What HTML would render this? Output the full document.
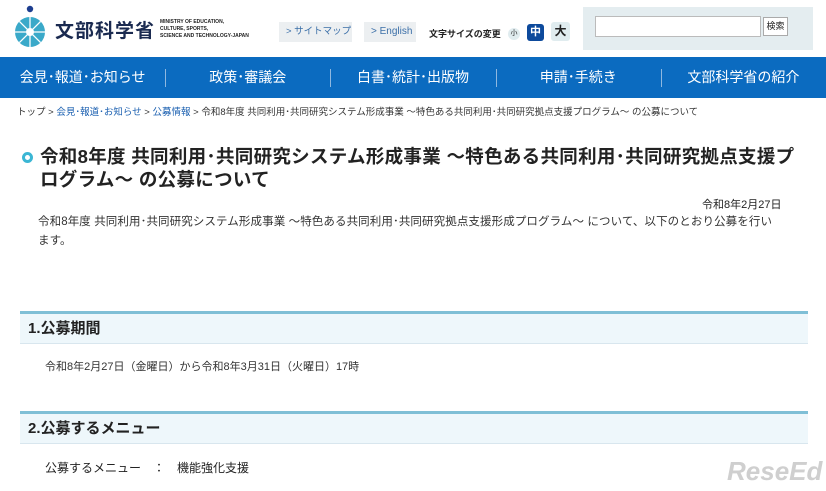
<!DOCTYPE html><html><head><meta charset="utf-8"><style>
*{margin:0;padding:0;box-sizing:border-box}
body{width:826px;height:491px;overflow:hidden;background:#fff;font-family:"Liberation Sans","Noto Sans CJK JP",sans-serif;color:#222;position:relative}
.a{position:absolute;white-space:nowrap}
.nav{position:absolute;left:0;top:57px;width:826px;height:41px;background:#0b6bc0;display:flex;color:#fff;font-size:14px}
.nav div{flex:1;text-align:center;line-height:41px;position:relative}
.nav div+div:before{content:"";position:absolute;left:0;top:12px;height:18px;border-left:1px solid #8fb8e0}
.btn{position:absolute;top:22px;height:20px;background:#eceff1;color:#3b6fa8;font-size:10px;line-height:20px;padding-left:7px;white-space:nowrap;overflow:hidden}
.sec{position:absolute;left:20px;width:788px;height:33px;border-top:3px solid #7fbfd6;background:#eef7fb;border-bottom:1px solid #d8e6ee;font-size:15px;font-weight:bold;line-height:30px;padding-left:8px}
</style></head><body>
<svg class="a" style="left:13px;top:5px" width="40" height="44" viewBox="0 0 40 44"><circle cx="17" cy="4" r="3.2" fill="#1d3e8f"/><circle cx="17" cy="27" r="15" fill="#3aa9c9"/><circle cx="17" cy="27" r="4" fill="#fff"/><g stroke="#fff" stroke-width="1.3"><line x1="17" y1="12" x2="17" y2="42"/><line x1="2" y1="27" x2="32" y2="27"/><line x1="6.4" y1="16.4" x2="27.6" y2="37.6"/><line x1="27.6" y1="16.4" x2="6.4" y2="37.6"/></g></svg>
<div class="a" style="left:55px;top:16px;font-size:19px;font-weight:bold;color:#1a2a50;letter-spacing:1px">文部科学省</div>
<div class="a" style="left:160px;top:19px;font-size:5px;font-weight:bold;line-height:7px;color:#222">MINISTRY OF EDUCATION,<br>CULTURE, SPORTS,<br>SCIENCE AND TECHNOLOGY-JAPAN</div>
<div class="btn" style="left:279px;width:73px;font-size:9.5px">&gt; サイトマップ</div>
<div class="btn" style="left:364px;width:52px">&gt; English</div>
<div class="a" style="left:429px;top:27px;font-size:9px;font-weight:bold">文字サイズの変更</div>
<div class="a" style="left:508px;top:28px;width:12px;height:12px;border-radius:6px;background:#e0ecef;font-size:7px;text-align:center;line-height:12px">小</div>
<div class="a" style="left:527px;top:24px;width:17px;height:17px;border-radius:3px;background:#0d4a9c;color:#fff;font-size:11px;font-weight:bold;text-align:center;line-height:17px">中</div>
<div class="a" style="left:551px;top:22px;width:19px;height:19px;border-radius:3px;background:#e0ecef;font-size:12px;font-weight:bold;text-align:center;line-height:19px">大</div>
<div class="a" style="left:583px;top:7px;width:230px;height:43px;background:#e4edf0"></div>
<div class="a" style="left:595px;top:16px;width:166px;height:21px;background:#fff;border:1px solid #bbb"></div>
<div class="a" style="left:763px;top:17px;width:25px;height:19px;background:#fff;border:1px solid #aaa;font-size:9px;text-align:center;line-height:17px">検索</div>
<div class="nav"><div>会見･報道･お知らせ</div><div>政策･審議会</div><div>白書･統計･出版物</div><div>申請･手続き</div><div>文部科学省の紹介</div></div>
<div class="a" style="left:17px;top:104px;font-size:9.5px;color:#333"><span>トップ</span> &gt; <span style="color:#1a5fb0">会見･報道･お知らせ</span> &gt; <span style="color:#1a5fb0">公募情報</span> &gt; 令和8年度 共同利用･共同研究システム形成事業 ～特色ある共同利用･共同研究拠点支援プログラム～ の公募について</div>
<div class="a" style="left:22px;top:152px;width:11px;height:11px;border-radius:6px;border:3px solid #3bb6d4"></div>
<div class="a" style="left:40px;top:145px;font-size:18.5px;font-weight:bold;line-height:23px;white-space:normal;width:765px;letter-spacing:0.3px">令和8年度 共同利用･共同研究システム形成事業 ～特色ある共同利用･共同研究拠点支援プログラム～ の公募について</div>
<div class="a" style="left:702px;top:196px;font-size:11px">令和8年2月27日</div>
<div class="a" style="left:38px;top:213px;font-size:11.5px;line-height:19px;white-space:normal;width:742px;color:#333;letter-spacing:0.1px">令和8年度 共同利用･共同研究システム形成事業 ～特色ある共同利用･共同研究拠点支援形成プログラム～ について、以下のとおり公募を行います。</div>
<div class="sec" style="top:311px">1.公募期間</div>
<div class="a" style="left:45px;top:358px;font-size:11px;color:#333">令和8年2月27日（金曜日）から令和8年3月31日（火曜日）17時</div>
<div class="sec" style="top:411px">2.公募するメニュー</div>
<div class="a" style="left:45px;top:459px;font-size:12px">公募するメニュー　：　機能強化支援</div>
<div class="a" style="left:727px;top:456px;font-size:26px;font-weight:bold;color:#cfcfcf;font-style:italic">ReseEd</div>
</body></html>
